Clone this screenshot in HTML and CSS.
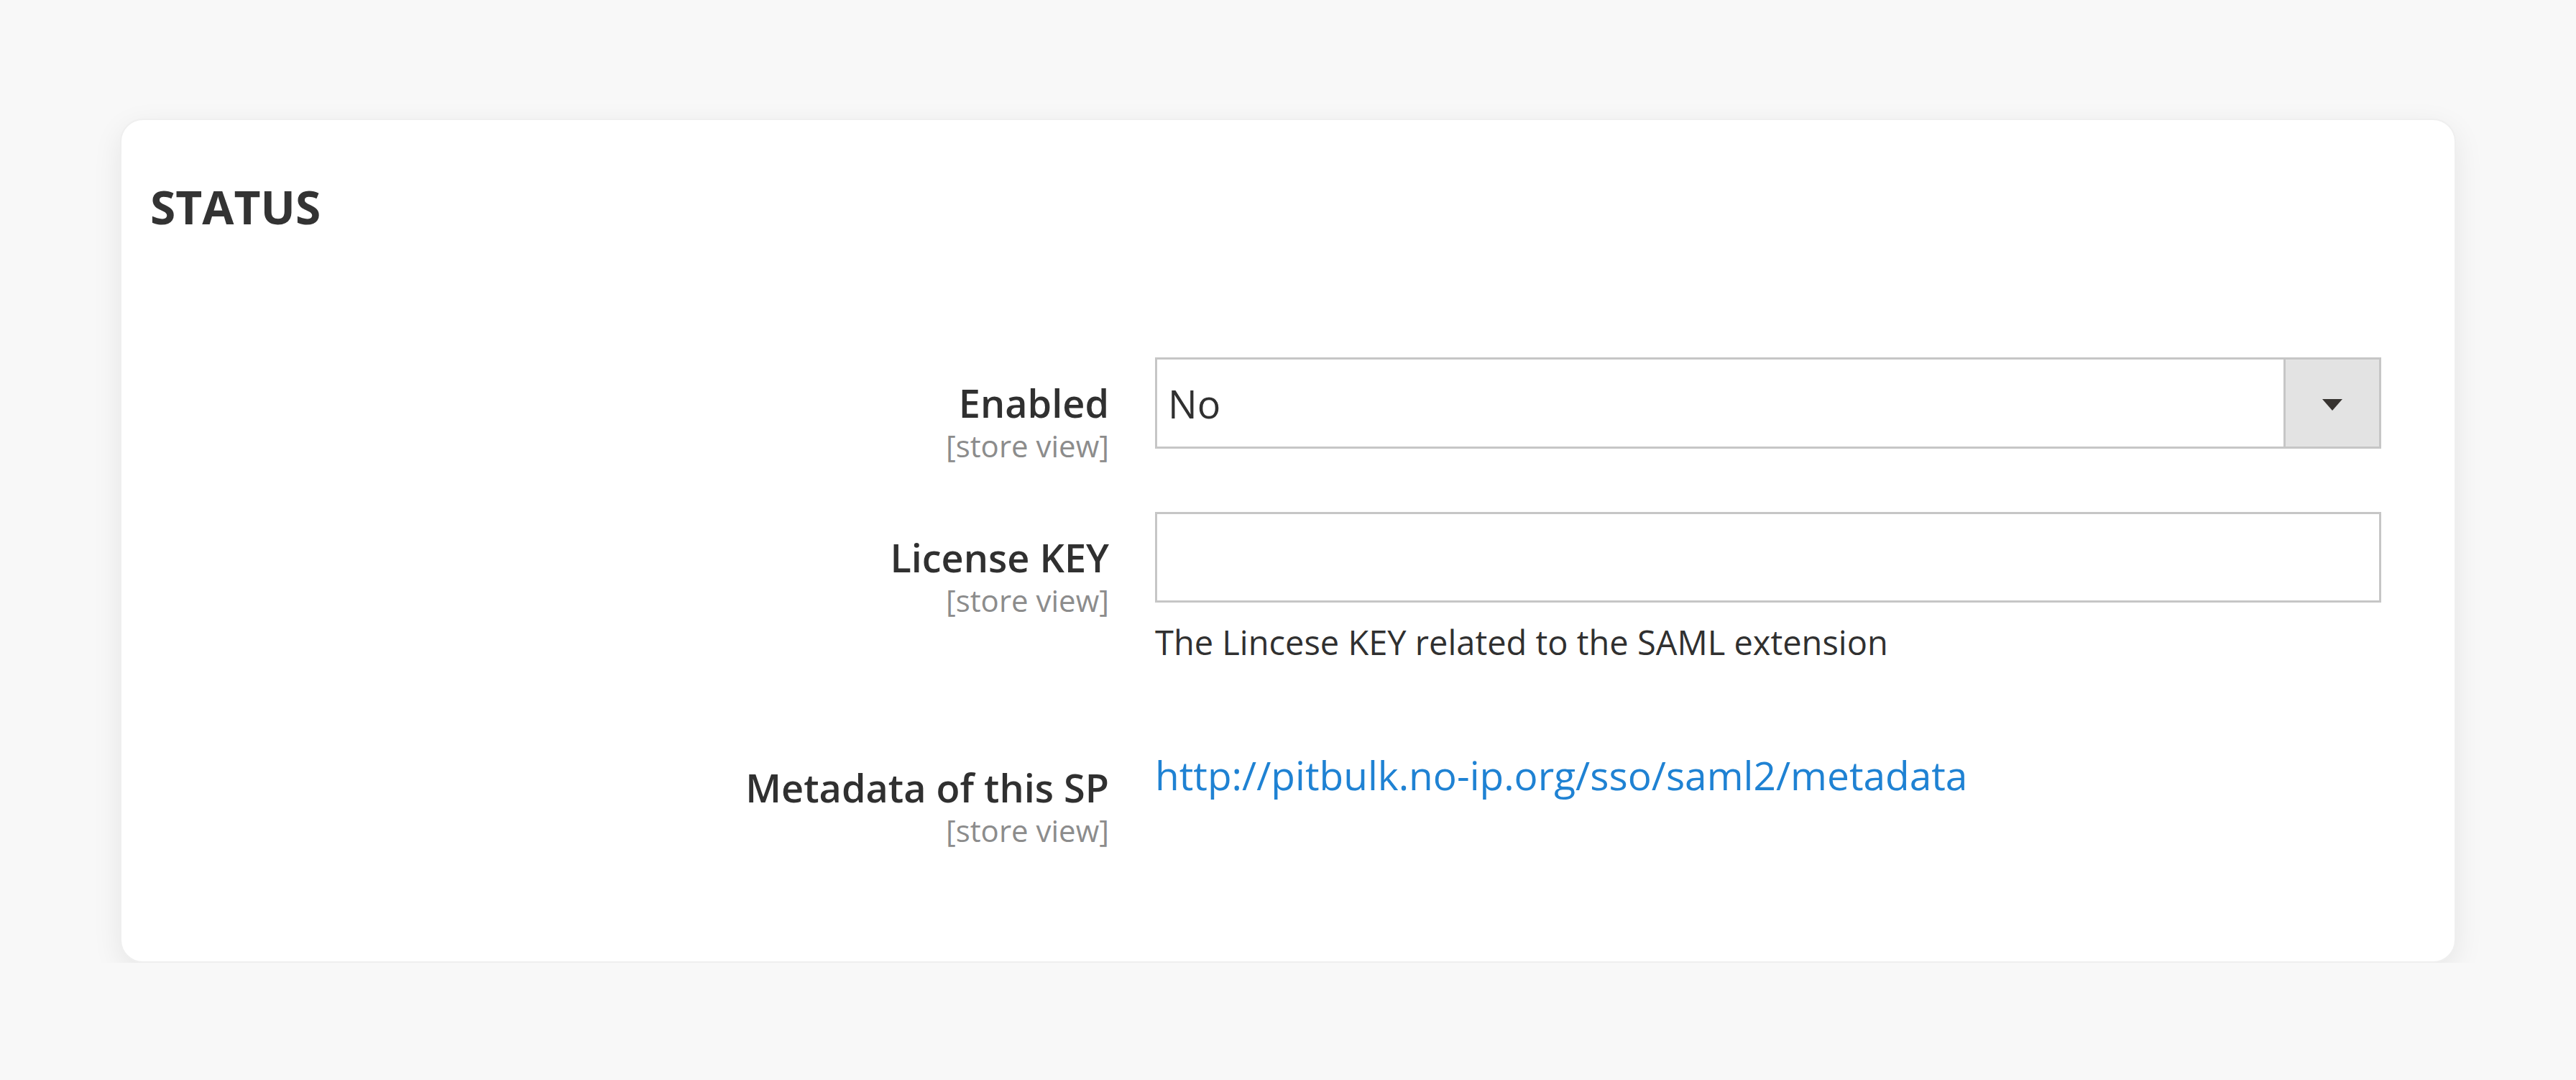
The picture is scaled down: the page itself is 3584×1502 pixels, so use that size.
FILE: index.html
```html
<!DOCTYPE html>
<html lang="en">
<head>
<meta charset="utf-8">
<title>Status</title>
<link rel="stylesheet" href="styles.css">
</head>
<body>
<div class="page">
  <section class="card">
    <h2 class="legend">STATUS</h2>
    <div class="fields">
      <div class="field">
        <div class="label">
          <span class="label-text">Enabled</span>
          <span class="scope">[store view]</span>
        </div>
        <div class="control">
          <div class="select">
            <span class="select-value">No</span>
            <span class="select-btn"><svg class="arrow" viewBox="0 0 28 16" width="28" height="16"><path d="M0 0 H28 L14 16 Z" fill="#373330"/></svg></span>
          </div>
        </div>
      </div>
      <div class="field field-key">
        <div class="label">
          <span class="label-text">License KEY</span>
          <span class="scope">[store view]</span>
        </div>
        <div class="control">
          <input class="input" type="text" value="">
          <p class="note">The Lincese KEY related to the SAML extension</p>
        </div>
      </div>
      <div class="field field-meta">
        <div class="label label-meta">
          <span class="label-text">Metadata of this SP</span>
          <span class="scope">[store view]</span>
        </div>
        <div class="control">
          <a class="link" href="#">http://pitbulk.no-ip.org/sso/saml2/metadata</a>
        </div>
      </div>
    </div>
  </section>
</div>
</body>
</html>
```

FILE: styles.css
```css
* { box-sizing: border-box; }
html, body {
  margin: 0;
  padding: 0;
  background: #f8f8f8;
}
body {
  font-family: "Open Sans", "Noto Sans", "Liberation Sans", sans-serif;
  color: #303030;
}
.page {
  padding: 165px 167px 0 167px;
}
.card {
  width: 3250px;
  height: 1174px;
  background: #ffffff;
  border: 2px solid #efefef;
  border-radius: 32px;
  box-shadow: 0 12px 40px rgba(0, 0, 0, 0.08);
  padding: 89px 102px 0 40px;
}
.legend {
  margin: 0;
  font-size: 64px;
  line-height: 64px;
  font-weight: 700;
  color: #333333;
}
.fields {
  margin-top: 177px;
}
.field {
  display: grid;
  grid-template-columns: 1334px 1706px;
  column-gap: 64px;
}
.field-key {
  margin-top: 67px;
}
.field-meta {
  margin-top: 121px;
}
.label {
  display: flex;
  flex-direction: column;
  align-items: flex-end;
  padding-top: 31px;
  text-align: right;
}
.label-meta {
  padding-top: 18px;
}
.label-text {
  font-size: 54px;
  line-height: 65px;
  font-weight: 600;
  color: #303030;
}
.scope {
  margin-top: 2px;
  font-size: 42px;
  line-height: 50px;
  color: #8c8c8c;
}
.control {
  display: flex;
  flex-direction: column;
}
.select {
  display: flex;
  height: 127px;
  border: 3px solid #c6c6c6;
  background: #ffffff;
}
.select-value {
  flex: 1;
  display: flex;
  align-items: center;
  padding-left: 15px;
  font-size: 54px;
  color: #303030;
}
.select-btn {
  width: 133px;
  display: flex;
  align-items: center;
  justify-content: center;
  background: #e3e3e3;
  border-left: 3px solid #c6c6c6;
}
.arrow {
  display: block;
  margin-top: 4px;
}
.input {
  display: block;
  width: 100%;
  height: 126px;
  margin: 0;
  border: 3px solid #c6c6c6;
  background: #ffffff;
  font: inherit;
  font-size: 54px;
  padding: 0 15px;
  outline: none;
}
.note {
  margin: 24px 0 0 0;
  font-size: 47px;
  line-height: 62px;
  color: #303030;
}
.link {
  font-size: 55px;
  line-height: 66px;
  color: #1f82d3;
  text-decoration: none;
}
```
